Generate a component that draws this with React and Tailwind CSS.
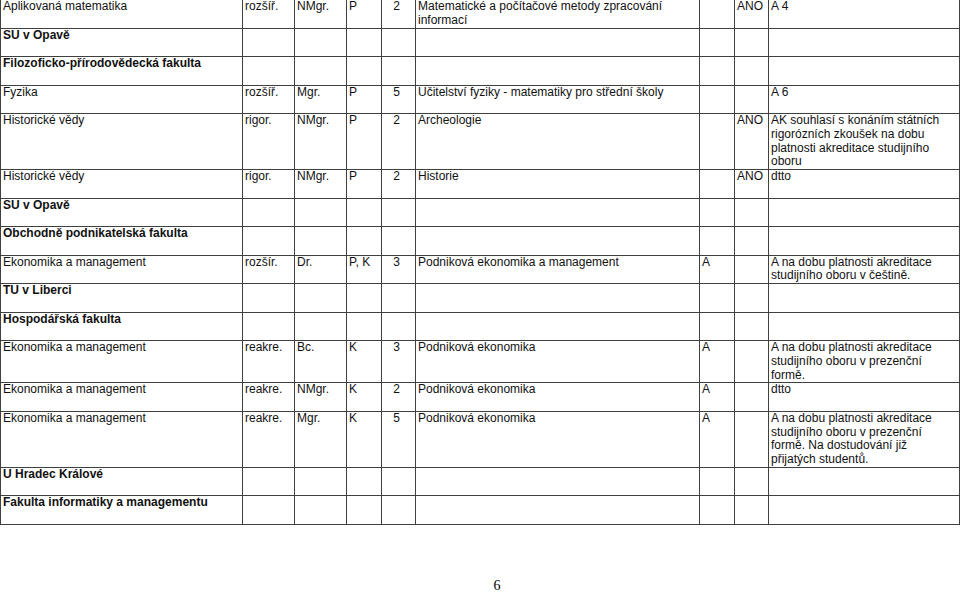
import React from 'react';

// columns: obor, typ, stupeň, forma, délka, program/obor, A, souhlas, pozn.
const rows = [
  { cells: ['Aplikovaná matematika', 'rozšíř.', 'NMgr.', 'P', '2', 'Matematické a počítačové metody zpracování informací', '', 'ANO', 'A 4'] },
  { head: 'SU v Opavě' },
  { head: 'Filozoficko-přírodovědecká fakulta' },
  { cells: ['Fyzika', 'rozšíř.', 'Mgr.', 'P', '5', 'Učitelství fyziky - matematiky pro střední školy', '', '', 'A 6'] },
  { cells: ['Historické vědy', 'rigor.', 'NMgr.', 'P', '2', 'Archeologie', '', 'ANO', 'AK souhlasí s konáním státních rigorózních zkoušek na dobu platnosti akreditace studijního oboru'] },
  { cells: ['Historické vědy', 'rigor.', 'NMgr.', 'P', '2', 'Historie', '', 'ANO', 'dtto'] },
  { head: 'SU v Opavě' },
  { head: 'Obchodně podnikatelská fakulta' },
  { cells: ['Ekonomika a management', 'rozšír.', 'Dr.', 'P, K', '3', 'Podniková ekonomika a management', 'A', '', 'A na dobu platnosti akreditace studijního oboru v češtině.'] },
  { head: 'TU v Liberci' },
  { head: 'Hospodářská fakulta' },
  { cells: ['Ekonomika a management', 'reakre.', 'Bc.', 'K', '3', 'Podniková ekonomika', 'A', '', 'A na dobu platnosti akreditace studijního oboru v prezenční formě.'] },
  { cells: ['Ekonomika a management', 'reakre.', 'NMgr.', 'K', '2', 'Podniková ekonomika', 'A', '', 'dtto'] },
  { cells: ['Ekonomika a management', 'reakre.', 'Mgr.', 'K', '5', 'Podniková ekonomika', 'A', '', 'A na dobu platnosti akreditace studijního oboru v prezenční formě. Na dostudování již přijatých studentů.'] },
  { head: 'U Hradec Králové' },
  { head: 'Fakulta informatiky a managementu' },
];

const widths = ['w-[242px]', 'w-[52px]', 'w-[52px]', 'w-[35px]', 'w-[34px]', 'w-[284px]', 'w-[35px]', 'w-[34px]', 'w-[191px]'];

function Cell({ children, center, bold }) {
  return (
    <td className={`border border-[#404040] align-top pt-0 pb-0 pl-[2px] pr-[6px] ${center ? 'text-center' : 'text-left'} ${bold ? 'font-bold' : ''}`}>
      <div className="min-h-[27.5px]">{children}</div>
    </td>
  );
}

export default function App() {
  return (
    <div className="w-[960px] h-[593px] bg-white overflow-hidden text-[#111]" style={{ fontFamily: '"Liberation Sans", Arial, sans-serif' }}>
      <table className="table-fixed border-collapse w-[959px] -mt-px text-[12px] leading-[13.75px]">
        <colgroup>
          {widths.map((w, i) => (
            <col key={i} className={w} />
          ))}
        </colgroup>
        <tbody>
          {rows.map((row, i) => (
            <tr key={i}>
              {row.head
                ? [<Cell key="h" bold>{row.head}</Cell>, ...Array.from({ length: 8 }, (_, j) => <Cell key={j} />)]
                : row.cells.map((c, j) => (
                    <Cell key={j} center={j === 4}>{c}</Cell>
                  ))}
            </tr>
          ))}
        </tbody>
      </table>
      <div className="mt-[54px] pl-[34px] text-center text-[14px] leading-[14px] text-black" style={{ fontFamily: '"Liberation Serif", "Times New Roman", serif' }}>
        6
      </div>
    </div>
  );
}
